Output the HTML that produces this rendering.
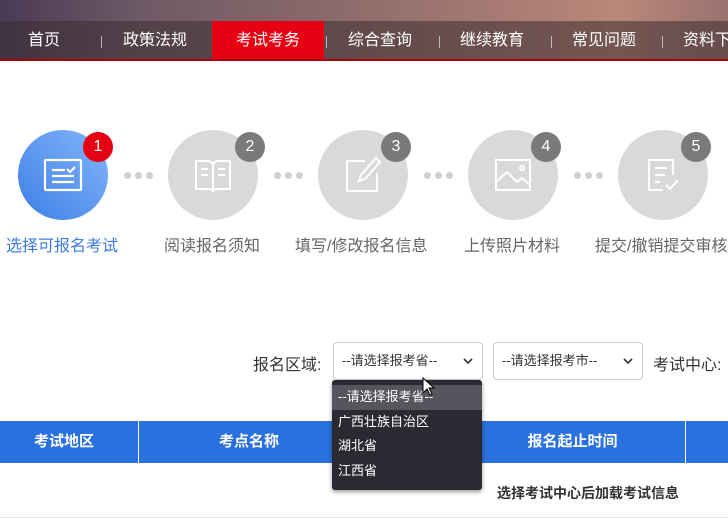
<!DOCTYPE html>
<html><head><meta charset="utf-8"><style>
*{margin:0;padding:0;box-sizing:border-box}
body{width:728px;height:525px;overflow:hidden;background:#fff;font-family:"Liberation Sans","Noto Sans CJK SC",sans-serif;position:relative}
.banner{position:absolute;left:0;top:0;width:728px;height:61px;background:linear-gradient(90deg,#4a3a55 0%,#6f5a66 20%,#8a6a6a 45%,#a97c74 70%,#b98878 85%,#9a7270 100%)}
.nav{position:absolute;left:0;top:21px;width:728px;height:38px;background:rgba(60,45,50,0.55)}
.redline{position:absolute;left:0;top:59px;width:728px;height:2px;background:#a8000c}
.ni{position:absolute;top:21px;height:40px;line-height:40px;color:#fff;font-size:16px;text-align:center}
.sep{position:absolute;top:36px;width:1px;height:12px;background:rgba(255,255,255,0.6)}
.act{background:#e60012}
.c{position:absolute;width:90px;height:90px;border-radius:50%;background:#d9d9d9;top:130px}
.c.b{background:linear-gradient(225deg,#84b6fb,#3d7fe6)}
.c svg{position:absolute;left:25px;top:25px}
.bd{position:absolute;width:30px;height:30px;border-radius:50%;background:#7a7a7a;color:#fff;font-size:16px;text-align:center;line-height:30px;top:132px}
.bd.r{background:#e60012}
.dots{position:absolute;top:172px;display:flex;gap:4px}
.dots i{width:7px;height:7px;border-radius:50%;background:#d0d0d0;display:block}
.lb{position:absolute;top:232px;font-size:16px;color:#666;white-space:nowrap}
.sel{position:absolute;top:342px;height:38px;border:1px solid #ccc;border-radius:4px;font-size:13px;color:#333;line-height:36px;padding-left:8px;background:#fff}
.sel svg{position:absolute;right:9px;top:15px}
.th{position:absolute;top:421px;left:0;width:728px;height:42px;background:#2b70df}
.th div{position:absolute;top:0;height:42px;line-height:42px;color:#fff;font-weight:bold;font-size:15px;text-align:center}
.vl{position:absolute;top:421px;width:1px;height:42px;background:#fff}
.dd{position:absolute;left:332px;top:380px;width:150px;height:110px;background:#2b2a33;border-radius:3px;box-shadow:0 2px 4px rgba(0,0,0,.4);color:#fff;font-size:13px}
.dd div{height:24.5px;line-height:24.5px;padding-left:6px}
</style></head><body>
<div class="banner"></div>
<div class="nav"></div>
<div class="ni act" style="left:212px;width:112px;top:21px;height:38px;line-height:40px"></div>
<div class="redline"></div>
<div class="ni" style="left:0;width:88px">首页</div>
<div class="sep" style="left:101px"></div>
<div class="ni" style="left:105px;width:100px">政策法规</div>
<div class="ni" style="left:212px;width:112px">考试考务</div>
<div class="sep" style="left:326px"></div>
<div class="ni" style="left:330px;width:100px">综合查询</div>
<div class="sep" style="left:439px"></div>
<div class="ni" style="left:442px;width:100px">继续教育</div>
<div class="sep" style="left:551px"></div>
<div class="ni" style="left:554px;width:100px">常见问题</div>
<div class="sep" style="left:662px"></div>
<div class="ni" style="left:683px;width:80px;text-align:left">资料下载</div>

<div class="c b" style="left:18px"><svg width="40" height="40" viewBox="0 0 40 40" fill="none" stroke="#fff" stroke-width="2.2"><rect x="2" y="5" width="36" height="30" rx="1"/><path d="M9 15h13M9 21h22M9 27h22M24 14l3 3 5-5"/></svg></div>
<div class="bd r" style="left:83px">1</div>
<div class="dots" style="left:124px"><i></i><i></i><i></i></div>
<div class="c" style="left:168px"><svg width="40" height="40" viewBox="0 0 40 40" fill="none" stroke="#fff" stroke-width="2"><path d="M3 6h12a5 5 0 0 1 5 5v26a4 4 0 0 0-4-3H3zM37 6H25a5 5 0 0 0-5 5v26a4 4 0 0 1 4-3h13z"/><path d="M8 14h7M8 20h7M25 14h7M25 20h7"/></svg></div>
<div class="bd" style="left:235px">2</div>
<div class="dots" style="left:274px"><i></i><i></i><i></i></div>
<div class="c" style="left:318px"><svg width="40" height="40" viewBox="0 0 40 40" fill="none" stroke="#fff" stroke-width="2"><path d="M22 6H4v30h30V18"/><path d="M33 3l4 4-15 17-6 2 2-6z"/></svg></div>
<div class="bd" style="left:381px">3</div>
<div class="dots" style="left:424px"><i></i><i></i><i></i></div>
<div class="c" style="left:468px"><svg width="40" height="40" viewBox="0 0 40 40" fill="none" stroke="#fff" stroke-width="2"><rect x="3" y="5" width="34" height="30"/><path d="M3 27l11-10 10 10 5-4 8 7"/><circle cx="29" cy="13" r="2"/></svg></div>
<div class="bd" style="left:531px">4</div>
<div class="dots" style="left:574px"><i></i><i></i><i></i></div>
<div class="c" style="left:618px"><svg width="40" height="40" viewBox="0 0 40 40" fill="none" stroke="#fff" stroke-width="2"><path d="M30 20V5H6v30h14"/><path d="M12 13h12M12 20h10M12 27h5M23 30l4 4 8-9"/></svg></div>
<div class="bd" style="left:681px">5</div>
<div class="lb" style="left:6px;color:#3b7be3">选择可报名考试</div>
<div class="lb" style="left:164px">阅读报名须知</div>
<div class="lb" style="left:295px">填写/修改报名信息</div>
<div class="lb" style="left:464px">上传照片材料</div>
<div class="lb" style="left:595px">提交/撤销提交审核</div>

<div style="position:absolute;left:253px;top:351px;font-size:16px;color:#333">报名区域:</div>
<div class="sel" style="left:333px;width:150px">--请选择报考省--<svg width="10" height="7" viewBox="0 0 10 7"><path d="M1 1l4 4 4-4" fill="none" stroke="#333" stroke-width="1.6"/></svg></div>
<div class="sel" style="left:493px;width:150px">--请选择报考市--<svg width="10" height="7" viewBox="0 0 10 7"><path d="M1 1l4 4 4-4" fill="none" stroke="#333" stroke-width="1.6"/></svg></div>
<div style="position:absolute;left:653px;top:351px;font-size:16px;color:#333;white-space:nowrap">考试中心:</div>

<div class="th"><div style="left:0;width:128px">考试地区</div><div style="left:139px;width:220px">考点名称</div><div style="left:460px;width:225px">报名起止时间</div></div>
<div class="vl" style="left:138px"></div>
<div class="vl" style="left:685px"></div>
<div style="position:absolute;left:497px;top:483px;font-size:14px;color:#333;font-weight:bold;white-space:nowrap">选择考试中心后加载考试信息</div>
<div style="position:absolute;left:0;top:517px;width:728px;height:1px;background:#e8e8e8"></div>

<div class="dd"><div style="background:#56555e;margin-top:5px">--请选择报考省--</div><div>广西壮族自治区</div><div>湖北省</div><div>江西省</div></div>
<svg style="position:absolute;left:422px;top:377px" width="14" height="20" viewBox="0 0 14 20"><path d="M1 1v15l4-4 3 6 2-1-3-6h5z" fill="#fff" stroke="#000" stroke-width="1"/></svg>
</body></html>
